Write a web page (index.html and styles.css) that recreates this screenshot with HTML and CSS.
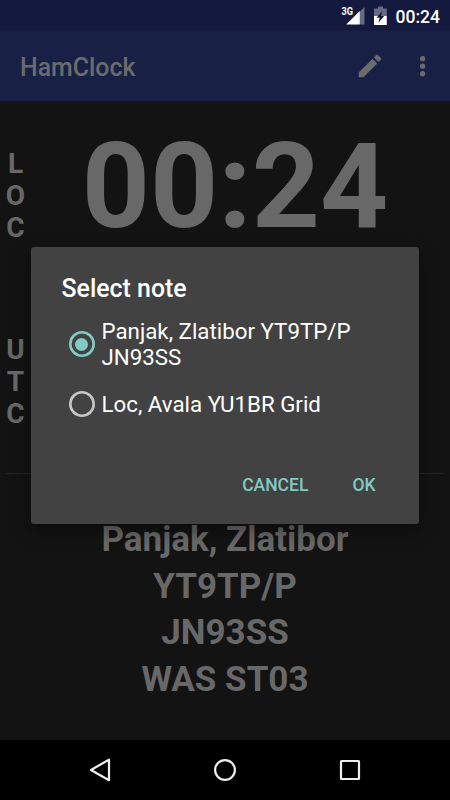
FILE: index.html
```html
<!DOCTYPE html>
<html lang="en">
<head>
  <meta charset="UTF-8" />
  <meta name="viewport" content="width=device-width, initial-scale=1.0" />
  <title>HamClock</title>
  <link rel="stylesheet" href="styles.css">
</head>
<body>

  <div class="screen">
    <div class="statusbar">
      <svg class="signal" width="24" height="20" viewBox="0 0 24 20">
        <path d="M23.500 1V18.500H18.800V5.500z" fill="#676a83"/>
        <path d="M5.200 18.500 18.800 5V18.500z" fill="#fff"/>
        <text x="0.500" y="9" class="net" textLength="11.500" lengthAdjust="spacingAndGlyphs">3G</text>
      </svg>
      <svg class="battery" width="13" height="20" viewBox="0 0 13 20">
        <path d="M4 0.500h5v2h3.200q.6 0 .6.6V10H0V3.100q0-.6.6-.6H4z" fill="#676a83"/>
        <path d="M0 10h12.800v8.400q0 .6-.6.6H.6Q0 19 0 18.400z" fill="#fff"/>
        <path d="M8.300 5 2.600 11.800H5.700L4.400 16.800 10.200 9.900H7z" fill="#14193c"/>
      </svg>
      <span class="time">00:24</span>
    </div>

    <div class="appbar">
      <h1>HamClock</h1>
      <svg class="edit" width="30" height="30" viewBox="0 0 24 24" fill="#6b6b6b">
        <path d="M3 17.250V21h3.750L17.810 9.940l-3.750-3.750L3 17.250zM20.710 7.040c.39-.39.39-1.020 0-1.410l-2.340-2.340c-.39-.39-1.020-.39-1.410 0l-1.830 1.830 3.750 3.750 1.830-1.830z"/>
      </svg>
      <svg class="more" width="30" height="30" viewBox="0 0 24 24" fill="#6b6b6b">
        <circle cx="11.700" cy="6.100" r="2.100"/>
        <circle cx="11.700" cy="12.100" r="2.100"/>
        <circle cx="11.700" cy="18.100" r="2.100"/>
      </svg>
    </div>

    <div class="content">
      <div class="zone">
        <div class="zone-label"><span>L</span><span>O</span><span>C</span></div>
        <div class="clock">00:24</div>
      </div>
      <div class="zone">
        <div class="zone-label utc"><span>U</span><span>T</span><span>C</span></div>
      </div>
      <div class="divider"></div>
      <div class="note">Panjak, Zlatibor<br>YT9TP/P<br>JN93SS<br>WAS ST03</div>
    </div>

    <div class="navbar">
      <svg width="30" height="30" viewBox="0 0 30 30">
        <path d="M24 4.600V25.200L6 15z"/>
      </svg>
      <svg width="30" height="30" viewBox="0 0 30 30">
        <circle cx="15" cy="15" r="9.900"/>
      </svg>
      <svg width="30" height="30" viewBox="0 0 30 30">
        <rect x="6" y="6" width="18" height="18" rx="0.500"/>
      </svg>
    </div>

    <div class="dialog">
      <h2>Select note</h2>
      <div class="option checked">
        <span class="radio"></span>
        <span>Panjak, Zlatibor YT9TP/P JN93SS</span>
      </div>
      <div class="option">
        <span class="radio"></span>
        <span>Loc, Avala YU1BR Grid</span>
      </div>
      <div class="buttons">
        <button>CANCEL</button>
        <button>OK</button>
      </div>
    </div>
  </div>

</body>
</html>
```
FILE: styles.css
```css
body {
  margin: 0;
  background-color: #000;
  font-family: Roboto, sans-serif;
}
.screen {
  position: relative;
  display: flex;
  flex-direction: column;
  width: 450px;
  height: 800px;
  overflow: hidden;
  background-color: #131313;
}
.statusbar {
  display: flex;
  align-items: center;
  justify-content: flex-end;
  box-sizing: border-box;
  height: 31px;
  padding-right: 10px;
  padding-top: 1px;
  border-bottom: 1px solid #161c3f;
  background-color: #14193e;
  color: #fff;
}
.signal {
  margin-right: 9px;
}
.net {
  font-size: 11px;
  font-weight: 700;
  fill: #fff;
}
.battery {
  margin-right: 9px;
}
.time {
  font-size: 17.5px;
  font-weight: 500;
  line-height: 22px;
  padding-top: 2px;
}
.appbar {
  display: flex;
  align-items: center;
  box-sizing: border-box;
  height: 70px;
  padding: 0 12px 0 20px;
  background-color: #192046;
}
.appbar h1 {
  flex: 1;
  margin: 2px 0 0;
  font-size: 24.9px;
  font-weight: 500;
  color: #6b6b6b;
}
.edit {
  margin-right: 23px;
}
.content {
  display: flex;
  flex: 1;
  flex-direction: column;
  padding-top: 2px;
  color: #686868;
  font-weight: 700;
}
.zone {
  display: flex;
  align-items: center;
  height: 185px;
}
.zone-label {
  display: flex;
  flex-direction: column;
  align-items: center;
  width: 31px;
  padding-top: 1px;
  font-size: 28px;
  line-height: 32px;
}
.zone-label.utc {
  padding-top: 3px;
}
.clock {
  flex: 1;
  padding-bottom: 19px;
  padding-right: 11px;
  font-size: 119px;
  line-height: 139px;
  text-align: center;
}
.divider {
  height: 1px;
  margin: 0 6px;
  background-color: #192046;
}
.note {
  flex: 1;
  padding-top: 43px;
  font-size: 35px;
  line-height: 46.7px;
  text-align: center;
}
.navbar {
  display: flex;
  align-items: center;
  justify-content: center;
  gap: 95px;
  height: 60px;
  background-color: #000;
}
.navbar svg {
  fill: none;
  stroke: #eee;
  stroke-width: 2.2;
  stroke-linejoin: round;
}
.dialog {
  position: absolute;
  top: 247px;
  left: 31px;
  box-sizing: border-box;
  width: 388px;
  height: 277px;
  padding: 27px 30px 0 30.5px;
  border-radius: 3px;
  background-color: #424242;
  box-shadow: 0 6px 18px rgba(0, 0, 0, 0.4);
  color: #fff;
}
.dialog h2 {
  margin: 0;
  font-size: 24.9px;
  font-weight: 500;
  line-height: 30px;
}
.option {
  display: flex;
  align-items: center;
  gap: 7px;
  height: 60px;
  padding-left: 7px;
  font-size: 22.3px;
  line-height: 26.4px;
}
.option.checked {
  margin-top: 10px;
}
.radio {
  display: flex;
  flex: none;
  align-items: center;
  justify-content: center;
  width: 26px;
  height: 26px;
  border-radius: 50%;
  box-shadow: inset 0 0 0 2.6px #c6c6c6;
}
.checked .radio {
  box-shadow: inset 0 0 0 2.6px #80cbc4;
}
.checked .radio::after {
  content: "";
  width: 13px;
  height: 13px;
  border-radius: 50%;
  background-color: #80cbc4;
}
.buttons {
  display: flex;
  justify-content: flex-end;
  gap: 24px;
  margin-top: 36px;
  padding-right: 3.5px;
}
.buttons button {
  padding: 5px 10px;
  border: none;
  background: none;
  font-family: inherit;
  font-size: 17.5px;
  font-weight: 500;
  line-height: 21px;
  color: #80cbc4;
}
```
